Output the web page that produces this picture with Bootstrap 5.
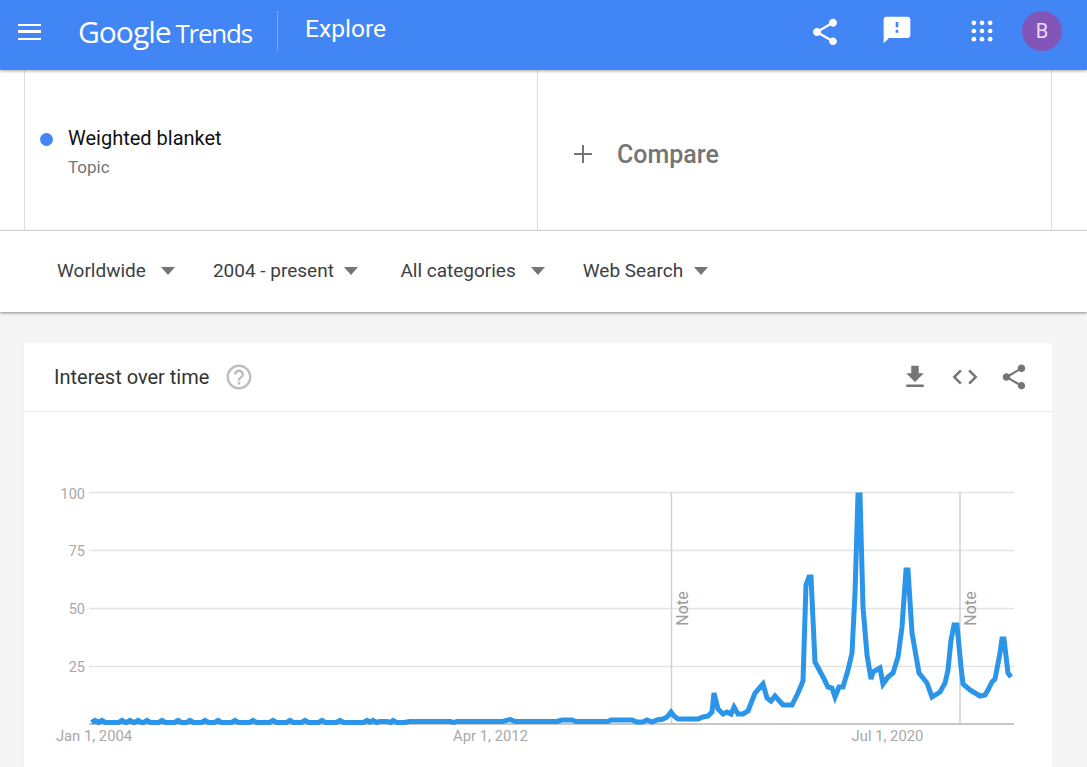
<!DOCTYPE html>
<html lang="en">
  <head>
    <meta charset="UTF-8" />
    <meta name="viewport" content="width=device-width, initial-scale=1.0"/>
    <title>Google Trends - Explore</title>
    <link href="https://cdn.jsdelivr.net/npm/bootstrap@5.3.3/dist/css/bootstrap.min.css" rel="stylesheet"/>
    <style>
      html, body { height: 767px; overflow: hidden; }
      body { background-color: #f5f5f5; font-family: Roboto, "Liberation Sans", sans-serif; }
      .top-bar {
        height: 70px;
        background: #4285f4;
        color: #fff;
        padding: 0 25px 8px 18px;
        position: relative;
        z-index: 3;
        box-shadow: 0 1px 3px rgba(0,0,0,.35);
      }
      .menu-btn { width: 23px; height: 16px; border-top: 2.5px solid #fff; border-bottom: 2.5px solid #fff; position: relative; margin-right: 37px; margin-top: 2px; }
      .menu-btn::after { content: ""; position: absolute; left: 0; right: 0; top: 4.25px; height: 2.5px; background: #fff; }
      .logo-text { font-family: "Open Sans", sans-serif; font-size: 30px; font-weight: 500; letter-spacing: -1px; width: 176px; white-space: nowrap; }
      .logo-text span { font-size: 26px; font-weight: 500; letter-spacing: -1.2px; margin-left: -2px; }
      .bar-divider { width: 1px; height: 40px; background: rgba(255,255,255,.3); margin: 0 27px 0 23px; }
      .page-name { font-size: 24.6px; margin-top: -4px; }
      .bar-icon { display: block; }
      .icon-share { margin-top: 2px; }
      .icon-note { margin-left: 40px; margin-top: -2px; }
      .icon-apps { margin-left: 55px; margin-top: -1px; }
      .user-dot { width: 40px; height: 40px; border-radius: 50%; background: #8256b9; color: #f3dcf7; font-size: 20px; margin-left: 26px; }
      .terms-box { height: 161px; background: #fff; border-bottom: 1px solid #dedede; padding: 0 35px 0 24px; }
      .term-cell { width: 513px; border-left: 1px solid #dedede; padding-left: 15px; padding-top: 4px; }
      .compare-cell { flex: 1; border-left: 1px solid #dedede; border-right: 1px solid #dedede; padding-left: 35px; padding-top: 10px; color: #757575; }
      .compare-plus { margin-top: -3px; }
      .term-dot { width: 13px; height: 13px; border-radius: 50%; background: #4285f4; margin-right: 15px; margin-top: -26px; }
      .term-name { font-size: 20px; color: #111; line-height: 26px; }
      .term-kind { font-size: 17px; color: #757575; line-height: 24px; margin-top: 4px; }
      .compare-label { font-size: 25px; font-weight: 500; margin-left: 24px; }
      .filter-bar { height: 81px; background: #fff; padding: 0 0 0 57px; box-shadow: 0 1px 3px rgba(0,0,0,.45); position: relative; z-index: 2; font-size: 19px; color: #3c4043; }
      .filter-item { display: flex; align-items: center; }
      .filter-item + .filter-item { margin-left: 38px; }
      .filter-item.wide-gap { margin-left: 42px; }
      .filter-caret { width: 0; height: 0; border-left: 7px solid transparent; border-right: 7px solid transparent; border-top: 8px solid #757575; margin-top: -2px; margin-left: 15px; }
      .filter-caret.tight { margin-left: 10.5px; }
      .chart-card { margin: 31px 35px 0 24px; height: 424px; border: 0; border-radius: 0; background: #fff; box-shadow: 0 1px 2px rgba(0,0,0,.06); }
      .chart-head { height: 69px; border-bottom: 1px solid #e6e6e6; padding: 0 23px 0 30px; }
      .chart-title { font-size: 20px; color: #333; }
      .help-icon { margin-left: 15px; }
      .head-icons { gap: 19.5px; }
      svg text { font-family: Roboto, "Liberation Sans", sans-serif; }
    </style>
  </head>
  <body>
    <header class="top-bar d-flex align-items-center">
      <div class="menu-btn"></div>
      <div class="logo-text">Google <span>Trends</span></div>
      <div class="bar-divider"></div>
      <div class="page-name">Explore</div>
      <div class="ms-auto d-flex align-items-center">
        <svg class="bar-icon icon-share" width="32" height="32" viewBox="0 0 24 24" fill="#fff"><path d="M18 16.080c-.76 0-1.440.3-1.960.77L8.910 12.700c.05-.23.09-.46.09-.7s-.04-.47-.09-.7l7.050-4.110c.54.5 1.250.81 2.040.81 1.660 0 3-1.340 3-3s-1.340-3-3-3-3 1.340-3 3c0 .24.04.47.09.7L8.040 9.810C7.500 9.310 6.790 9 6 9c-1.660 0-3 1.340-3 3s1.340 3 3 3c.79 0 1.500-.31 2.040-.81l7.120 4.160c-.05.21-.08.43-.08.65 0 1.610 1.310 2.920 2.920 2.920s2.920-1.310 2.920-2.920-1.310-2.920-2.920-2.920z"/></svg>
        <svg class="bar-icon icon-note" width="32" height="32" viewBox="0 0 24 24" fill="#fff"><path d="M20 2H4c-1.100 0-2 .9-2 2v18l4-4h14c1.100 0 2-.9 2-2V4c0-1.100-.9-2-2-2zm-7 12h-2v-2h2v2zm0-4h-2V6h2v4z"/></svg>
        <svg class="bar-icon icon-apps" width="28" height="28" viewBox="0 0 24 24" fill="#fff"><circle cx="5" cy="5" r="2"/><circle cx="12" cy="5" r="2"/><circle cx="19" cy="5" r="2"/><circle cx="5" cy="12" r="2"/><circle cx="12" cy="12" r="2"/><circle cx="19" cy="12" r="2"/><circle cx="5" cy="19" r="2"/><circle cx="12" cy="19" r="2"/><circle cx="19" cy="19" r="2"/></svg>
        <div class="user-dot d-flex align-items-center justify-content-center">B</div>
      </div>
    </header>

    <section class="terms-box d-flex">
      <div class="term-cell d-flex align-items-center">
        <div class="term-dot"></div>
        <div>
          <div class="term-name">Weighted blanket</div>
          <div class="term-kind">Topic</div>
        </div>
      </div>
      <div class="compare-cell d-flex align-items-center">
        <svg class="compare-plus" width="20" height="20" viewBox="0 0 20 20" fill="#757575"><rect x="9" y="1" width="2" height="18"/><rect x="1" y="9" width="18" height="2"/></svg>
        <span class="compare-label">Compare</span>
      </div>
    </section>

    <section class="filter-bar d-flex align-items-center">
      <div class="filter-item"><span>Worldwide</span><i class="filter-caret"></i></div>
      <div class="filter-item"><span>2004 - present</span><i class="filter-caret tight"></i></div>
      <div class="filter-item wide-gap"><span>All categories</span><i class="filter-caret"></i></div>
      <div class="filter-item"><span>Web Search</span><i class="filter-caret tight"></i></div>
    </section>

    <section class="card chart-card">
      <div class="chart-head d-flex align-items-center">
        <span class="chart-title">Interest over time</span>
        <svg class="help-icon" width="30" height="30" viewBox="0 0 24 24" fill="#bdbdbd"><path d="M11 18h2v-2h-2v2zm1-16C6.480 2 2 6.480 2 12s4.480 10 10 10 10-4.480 10-10S17.520 2 12 2zm0 18c-4.410 0-8-3.590-8-8s3.590-8 8-8 8 3.590 8 8-3.590 8-8 8zm0-14c-2.210 0-4 1.790-4 4h2c0-1.100.9-2 2-2s2 .9 2 2c0 2-3 1.750-3 5h2c0-2.250 3-2.500 3-5 0-2.210-1.790-4-4-4z"/></svg>
        <div class="ms-auto d-flex align-items-center head-icons">
          <svg width="30" height="30" viewBox="0 0 24 24" fill="#757575"><path d="M19 9h-4V3H9v6H5l7 7 7-7zM5 18v2h14v-2H5z"/></svg>
          <svg width="30" height="30" viewBox="0 0 24 24" fill="#757575"><path d="M9.400 16.600 4.800 12l4.600-4.600L8 6l-6 6 6 6 1.400-1.400zm5.200 0 4.600-4.600-4.600-4.600L16 6l6 6-6 6-1.400-1.400z"/></svg>
          <svg width="30" height="30" viewBox="0 0 24 24" fill="#757575"><path d="M18 16.080c-.76 0-1.440.3-1.960.77L8.910 12.700c.05-.23.09-.46.09-.7s-.04-.47-.09-.7l7.050-4.110c.54.5 1.250.81 2.040.81 1.660 0 3-1.340 3-3s-1.340-3-3-3-3 1.340-3 3c0 .24.04.47.09.7L8.040 9.810C7.500 9.310 6.790 9 6 9c-1.660 0-3 1.340-3 3s1.340 3 3 3c.79 0 1.500-.31 2.040-.81l7.120 4.160c-.05.21-.08.43-.08.65 0 1.610 1.310 2.920 2.920 2.920s2.920-1.310 2.920-2.920-1.310-2.920-2.920-2.920z"/></svg>
        </div>
      </div>
      <svg id="chart" width="1028" height="355" viewBox="24 412 1028 355">
        <g stroke="#e3e3e3" stroke-width="1.500">
          <line x1="89" y1="492.500" x2="1014" y2="492.500"/>
          <line x1="89" y1="550.500" x2="1014" y2="550.500"/>
          <line x1="89" y1="608.500" x2="1014" y2="608.500"/>
          <line x1="89" y1="666.500" x2="1014" y2="666.500"/>
        </g>
        <g stroke="#d0d0d0" stroke-width="1.500">
          <line x1="671.500" y1="492" x2="671.500" y2="724"/>
          <line x1="960" y1="492" x2="960" y2="724"/>
        </g>
        <line x1="89" y1="724" x2="1014" y2="724" stroke="#b5b5b5" stroke-width="1.500"/>
        <g font-size="14.500" fill="#a8a8a8" text-anchor="end">
          <text x="85" y="499">100</text>
          <text x="85" y="556">75</text>
          <text x="85" y="614">50</text>
          <text x="85" y="672">25</text>
        </g>
        <g font-size="14.800" fill="#a8a8a8" text-anchor="middle">
          <text x="94" y="741">Jan 1, 2004</text>
          <text x="490.500" y="741">Apr 1, 2012</text>
          <text x="887.500" y="741">Jul 1, 2020</text>
        </g>
        <g font-size="16" fill="#9a9a9a" text-anchor="middle">
          <text transform="translate(688 608.500) rotate(-90)">Note</text>
          <text transform="translate(976 608.500) rotate(-90)">Note</text>
        </g>
        <polyline id="trendLine" fill="none" stroke="#2b95e9" stroke-width="5" stroke-linejoin="miter" stroke-miterlimit="3"/>
      </svg>
    </section>

    <script src="https://cdn.jsdelivr.net/npm/bootstrap@5.3.3/dist/js/bootstrap.bundle.min.js"></script>
    <script>
      // flat years: bump x positions read off the picture, then the real shape
      const bumps = [95, 102, 122, 130, 138, 147, 162, 178, 190, 205, 218, 235, 253, 273, 290, 305, 322, 340, 367, 373];
      const pts = [];
      bumps.forEach(x => {
        pts.push([x - 3.5, 722.5], [x, 720.5], [x + 3.5, 722.5]);
      });
      const flat = [[380,721.5],[387,721.5],[391,722.5],[393,720.5],[397,722.5],[404,722.5],[410,721.5],[450,721.5],[454,722.5],[457,721.5],[503,721.5],[510,719.5],[515,721.5],[557,721.5],[562,720],[572,720],[576,721.5],[608,721.5],[611,720],[632,720],[637,722],[643,722],[647,720],[652,722],[657,720],[663,719]];
      const shape = [[667,717],[671,712],[674,716],[678,719],[698,719],[703,717],[708,716],[712,712],[714,693],[718,709],[723,714],[727,712],[731,714],[734,707],[738,714],[743,714],[748,711],[755,693],[763,684],[767,698],[771,701],[775,696],[783,705],[792,705],[798,693],[803,681],[806,585],[809,577],[811,577],[815,662],[823,677],[828,687],[832,688],[835,697],[839,687],[843,687],[848,670],[852,653],[855,593],[858,495],[860,495],[863,607],[867,655],[871,679],[873,672],[880,668],[883,684],[888,677],[893,673],[898,657],[902,627],[906,570],[908,570],[912,633],[919,673],[927,683],[932,697],[940,692],[945,683],[948,670],[951,640],[954,625],[957,625],[961,667],[963,684],[970,690],[980,696],[985,695],[988,690],[992,682],[995,679],[1000,653],[1002,639],[1004,639],[1008,673],[1011,677]];
      document.getElementById("trendLine").setAttribute("points", pts.concat(flat, shape).map(p => p.join(",")).join(" "));
    </script>
  </body>
</html>
